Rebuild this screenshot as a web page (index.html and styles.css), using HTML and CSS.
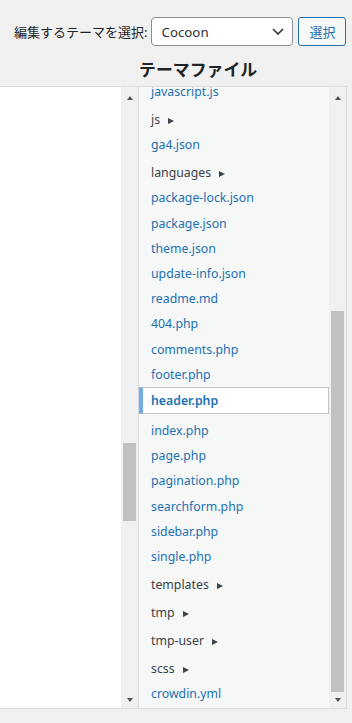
FILE: index.html
```html
<!DOCTYPE html>
<html lang="ja">
<head>
    <meta charset="UTF-8">
    <meta name="viewport" content="width=device-width, initial-scale=1.0">
    <title>テーマファイルエディター</title>
    <link rel="stylesheet" href="styles.css">
</head>
<body>
    <form class="theme-select">
        <label for="theme">編集するテーマを選択:</label>
        <div class="select" id="theme">
            <span>Cocoon</span>
            <svg class="chevron" width="12" height="7" viewBox="0 0 12 7"><polyline points="1,1 6,6 11,1" fill="none" stroke="#2c3338" stroke-width="1.6"/></svg>
        </div>
        <button type="submit">選択</button>
    </form>

    <div class="editor">
        <h2 class="files-title">テーマファイル</h2>

        <div class="code-pane">
            <div class="code-area"></div>
            <div class="scrollbar">
                <span class="arrow"><i class="up"></i></span>
                <div class="track"><div class="thumb" style="margin-top: 335px; height: 78px;"></div></div>
                <span class="arrow down-btn"><i class="down"></i></span>
            </div>
        </div>

        <div class="file-pane">
            <div class="file-list">
                <ul>
                    <li><a href="#">javascript.js</a></li>
                    <li class="folder"><span>js</span></li>
                    <li><a href="#">ga4.json</a></li>
                    <li class="folder"><span>languages</span></li>
                    <li><a href="#">package-lock.json</a></li>
                    <li><a href="#">package.json</a></li>
                    <li><a href="#">theme.json</a></li>
                    <li><a href="#">update-info.json</a></li>
                    <li><a href="#">readme.md</a></li>
                    <li><a href="#">404.php</a></li>
                    <li><a href="#">comments.php</a></li>
                    <li><a href="#">footer.php</a></li>
                    <li class="current"><a href="#">header.php</a></li>
                    <li><a href="#">index.php</a></li>
                    <li><a href="#">page.php</a></li>
                    <li><a href="#">pagination.php</a></li>
                    <li><a href="#">searchform.php</a></li>
                    <li><a href="#">sidebar.php</a></li>
                    <li><a href="#">single.php</a></li>
                    <li class="folder"><span>templates</span></li>
                    <li class="folder"><span>tmp</span></li>
                    <li class="folder"><span>tmp-user</span></li>
                    <li class="folder"><span>scss</span></li>
                    <li><a href="#">crowdin.yml</a></li>
                </ul>
            </div>
            <div class="scrollbar">
                <span class="arrow"><i class="up"></i></span>
                <div class="track"><div class="thumb" style="margin-top: 203px; height: 381px;"></div></div>
                <span class="arrow down-btn"><i class="down"></i></span>
            </div>
        </div>
    </div>
</body>
</html>
```

FILE: styles.css
```css
body {
    margin: 0;
    background-color: #f0f0f1;
    color: #1d2327;
    font-family: "Noto Sans", "Noto Sans CJK JP", sans-serif;
    font-size: 13px;
}
.theme-select {
    display: flex;
    align-items: center;
    height: 29px;
    padding: 17px 0 0 14px;
    margin: 0;
}
.theme-select label {
    font-size: 13px;
    margin-right: 4px;
}
.select {
    box-sizing: border-box;
    width: 142px;
    height: 29px;
    display: flex;
    align-items: center;
    justify-content: space-between;
    padding: 0 8px 0 9px;
    background-color: #fff;
    border: 1px solid #8c8f94;
    border-radius: 4px;
    color: #2c3338;
    font-size: 13.3px;
}
.theme-select button {
    box-sizing: border-box;
    width: 48px;
    height: 29px;
    margin-left: 5px;
    padding: 0;
    background-color: #f6f7f7;
    color: #2271b1;
    border: 1px solid #2271b1;
    border-radius: 3px;
    font-family: inherit;
    font-size: 13px;
}
.editor {
    display: grid;
    grid-template-columns: 138px 209px;
    grid-template-rows: auto 623px;
}
.files-title {
    grid-column: 2;
    grid-row: 1;
    margin: 0;
    padding: 14px 0 6px 1px;
    font-size: 16.9px;
    line-height: 20px;
    font-weight: 700;
    color: #1d2327;
}
.code-pane {
    grid-column: 1;
    grid-row: 2;
    display: flex;
    border-top: 1px solid #dcdcde;
    border-bottom: 1px solid #dcdcde;
}
.code-area {
    flex: 1;
    background-color: #fff;
}
.file-pane {
    grid-column: 2;
    grid-row: 2;
    display: flex;
    border: 1px solid #dcdcde;
    background-color: #f6f7f7;
}
.file-list {
    width: 190px;
    overflow: hidden;
}
.file-list ul {
    list-style: none;
    margin: -8px 0 0;
    padding: 0;
    font-size: 12.3px;
    line-height: 19.2px;
}
.file-list li a {
    display: block;
    padding: 3px 0 3px 12px;
    color: #2271b1;
    text-decoration: none;
    white-space: nowrap;
}
.file-list li.folder {
    padding: 5.8px 0 3px 12px;
    color: #3c434a;
}
.file-list li.folder span::after {
    content: "";
    display: inline-block;
    margin-left: 8px;
    border-left: 6px solid #3c434a;
    border-top: 3.5px solid transparent;
    border-bottom: 3.5px solid transparent;
    vertical-align: 0;
}
.file-list li.current a {
    padding: 3px 0 2.8px 8px;
    margin-bottom: 4px;
    background-color: #fff;
    border: 1px solid #c3c4c7;
    border-left: 4px solid #72aee6;
    font-weight: 600;
}
.scrollbar {
    width: 17px;
    display: flex;
    flex-direction: column;
    background-color: #f0f0f0;
}
.arrow {
    height: 21px;
    display: flex;
    align-items: center;
    justify-content: center;
}
.arrow.down-btn {
    height: 16px;
}
.arrow i {
    display: block;
    border-left: 3.5px solid transparent;
    border-right: 3.5px solid transparent;
}
.arrow .up {
    border-bottom: 4px solid #505050;
}
.arrow .down {
    border-top: 4px solid #505050;
}
.track {
    flex: 1;
}
.thumb {
    width: 13px;
    margin-left: 2px;
    background-color: #c1c1c1;
}
```
